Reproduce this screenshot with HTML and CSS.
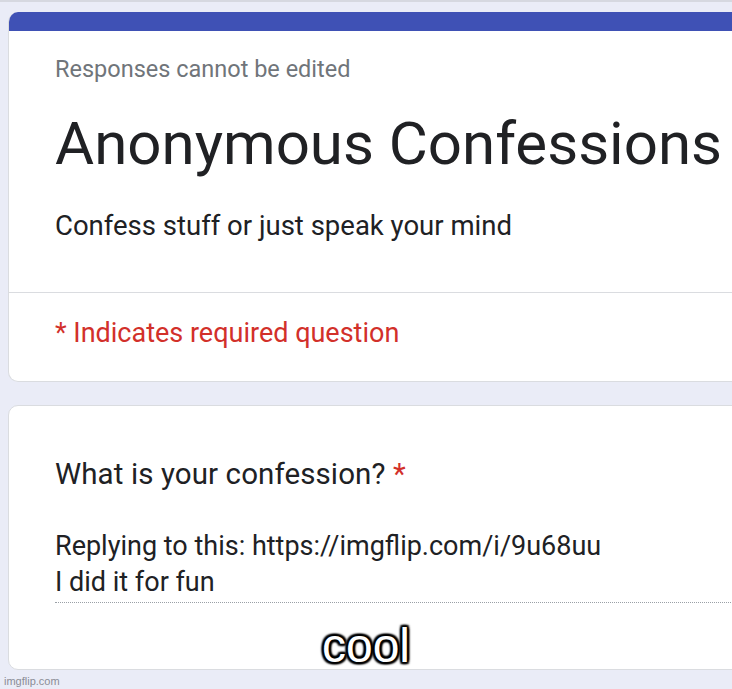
FILE: index.html
```html
<!DOCTYPE html>
<html>
<head>
<meta charset="utf-8">
<link rel="stylesheet" href="styles.css">
</head>
<body>
<div class="page">
  <div class="card card-head">
    <div class="bar"></div>
    <div class="head-main">
      <div class="note">Responses cannot be edited</div>
      <div class="title">Anonymous Confessions</div>
      <div class="desc">Confess stuff or just speak your mind</div>
    </div>
    <div class="required">* Indicates required question</div>
  </div>
  <div class="card card-q">
    <div class="question">What is your confession? <span class="star">*</span></div>
    <div class="answer">
      <div class="line">Replying to this: https://imgflip.com/i/9u68uu</div>
      <div class="line">I did it for fun</div>
    </div>
  </div>
</div>
<div class="caption">cool</div>
<div class="watermark">imgflip.com</div>
</body>
</html>
```

FILE: styles.css
```css
html, body {
  margin: 0;
  padding: 0;
}
body {
  width: 732px;
  height: 689px;
  overflow: hidden;
  background: #eaecf7;
  border-top: 2px solid #d6d8e0;
  box-sizing: border-box;
  position: relative;
  font-family: Roboto, "Liberation Sans", sans-serif;
  color: #202124;
}
.page {
  padding-top: 10px;
  padding-left: 8px;
}
.card {
  width: 780px;
  background: #fff;
  border: 1px solid #dadce0;
  border-radius: 10px;
  box-sizing: border-box;
  overflow: hidden;
}
.card-head {
  border-top: none;
}
.bar {
  height: 19px;
  background: #3f51b5;
}
.head-main {
  padding: 23px 0 49px 46px;
  border-bottom: 1px solid #dadce0;
}
.note {
  font-size: 23.5px;
  line-height: 30px;
  color: #70757a;
}
.title {
  margin-top: 25px;
  font-size: 60px;
  line-height: 70px;
  color: #202124;
}
.desc {
  margin-top: 30px;
  font-size: 27.5px;
  line-height: 34px;
}
.required {
  padding: 24px 0 32px 46px;
  font-size: 27px;
  line-height: 32px;
  color: #d2302a;
}
.card-q {
  margin-top: 23px;
  padding: 51px 0 66px 46px;
}
.question {
  font-size: 29.5px;
  line-height: 35px;
  letter-spacing: 0.1px;
}
.star {
  color: #d2302a;
}
.answer {
  margin-top: 36px;
  padding-bottom: 2px;
  border-bottom: 1px dotted #9aa0a6;
}
.line {
  font-size: 27px;
  line-height: 36px;
}
.caption {
  position: absolute;
  left: 0;
  width: 732px;
  top: 616px;
  text-align: center;
  font-family: "Liberation Sans", Arial, sans-serif;
  font-size: 48px;
  line-height: 56px;
  color: #fff;
  text-shadow: 2px 2px 2px #000, -2px -2px 2px #000, 2px -2px 2px #000, -2px 2px 2px #000, 0 2px 2px #000, 0 -2px 2px #000, 2px 0 2px #000, -2px 0 2px #000;
}
.watermark {
  position: absolute;
  left: 4px;
  top: 672px;
  font-family: "Liberation Sans", Arial, sans-serif;
  font-size: 11px;
  line-height: 14px;
  color: #8a8c96;
}
```
